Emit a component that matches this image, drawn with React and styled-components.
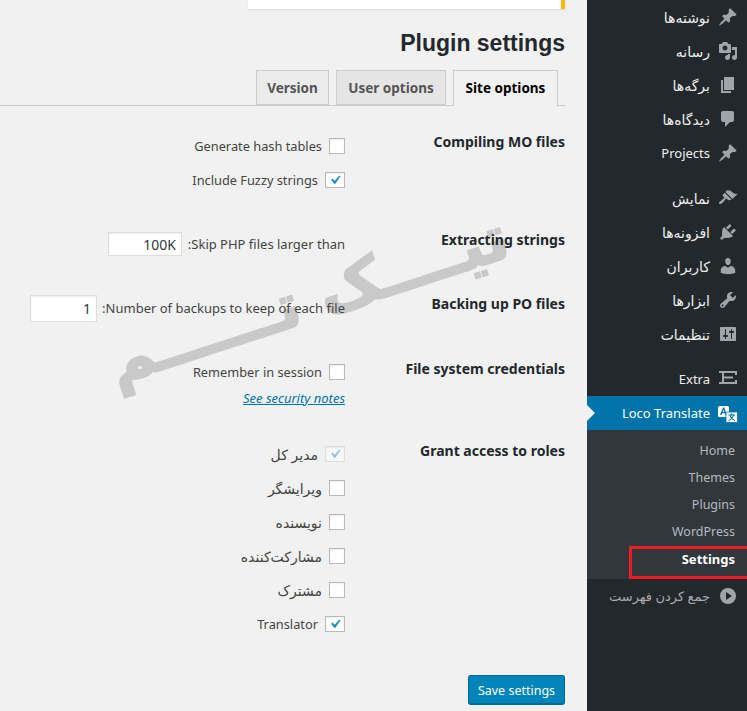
import React from 'react';
import styled, { createGlobalStyle } from 'styled-components';

const GlobalStyle = createGlobalStyle`
	html, body {
		margin: 0;
		padding: 0;
		background: #f1f1f1;
	}
	* {
		box-sizing: border-box;
	}
`;

const FONT = `'Noto Sans', 'DejaVu Sans', sans-serif`;

const Page = styled.div`
	display: flex;
	direction: rtl;
	width: 747px;
	height: 711px;
	overflow: hidden;
	position: relative;
	font-family: ${FONT};
	font-size: 13px;
	color: #444;
`;

const Sidebar = styled.nav`
	flex: 0 0 160px;
	background: #23282d;
`;

const MenuItem = styled.a`
	display: flex;
	align-items: center;
	gap: 8px;
	height: 34px;
	padding-right: 9px;
	margin-top: ${p => (p.$spaced ? '11px' : '0')};
	font-size: ${p => (p.$latin ? '13px' : '14px')};
	color: #eee;
	position: relative;
	background: ${p => (p.$active ? '#0073aa' : 'transparent')};

	svg {
		flex: 0 0 20px;
		fill: ${p => (p.$active ? '#fff' : '#a0a5aa')};
	}

	${p =>
		p.$active &&
		`
		color: #fff;
		&::after {
			content: '';
			position: absolute;
			left: 0;
			top: 9px;
			border: 8px solid transparent;
			border-left-color: #f1f1f1;
		}
	`}
`;

const SubMenu = styled.div`
	background: #32373c;
	padding: 7px 0;
`;

const SubItem = styled.a`
	display: flex;
	align-items: center;
	height: 27px;
	padding-right: 12px;
	font-size: ${p => (p.$current ? '13px' : '12.5px')};
	color: ${p => (p.$current ? '#fff' : '#b4b9be')};
	font-weight: ${p => (p.$current ? 700 : 400)};
	position: relative;

	${p =>
		p.$current &&
		`
		&::after {
			content: '';
			position: absolute;
			right: -4px;
			left: 42px;
			top: 1px;
			height: 27px;
			border: 3px solid #ed1c24;
		}
	`}
`;

const Collapse = styled(MenuItem)`
	font-size: 13px;
	color: #aaa;
`;

const Main = styled.main`
	flex: 1;
	padding-left: 0;
	padding-right: 22px;
	position: relative;
	z-index: 1;
`;

const Notice = styled.div`
	width: 317px;
	height: 9px;
	background: #fff;
	border-right: 4px solid #ffb900;
	box-shadow: 0 1px 1px rgba(0, 0, 0, 0.1);
`;

const Title = styled.h1`
	margin: 18px 0 11px;
	font-family: 'Liberation Sans', sans-serif;
	font-size: 23px;
	font-weight: 700;
	line-height: 32px;
	color: #23282d;
`;

const Tabs = styled.div`
	display: flex;
	gap: 7px;
	height: 36px;
	padding-right: 7px;
	border-bottom: 1px solid #ccc;
`;

const Tab = styled.a`
	width: ${p => p.$width}px;
	height: ${p => (p.$active ? '36px' : '35px')};
	border: 1px solid #ccc;
	border-bottom: ${p => (p.$active ? 'none' : '1px solid #ccc')};
	background: ${p => (p.$active ? '#f1f1f1' : p.$dim ? '#e5e5e5' : '#ececec')};
	color: ${p => (p.$active ? '#000' : '#555')};
	font-size: 13.5px;
	font-weight: 700;
	line-height: 34px;
	text-align: center;
`;

const Form = styled.form`
	padding-top: 23px;
`;

const Section = styled.section`
	display: grid;
	grid-template-columns: 220px 1fr;
	margin-bottom: 30px;
`;

const Heading = styled.h3`
	margin: 0;
	padding-top: ${p => p.$top || 3}px;
	font-size: 14px;
	font-weight: 700;
	line-height: 20px;
	color: #23282d;
`;

const Fields = styled.div`
	display: flex;
	flex-direction: column;
`;

const Field = styled.label`
	display: flex;
	align-items: center;
	gap: ${p => p.$gap || 7}px;
	height: 34px;
	font-size: ${p => p.$size || 12.8}px;
	white-space: nowrap;
`;

const Box = styled.span`
	flex: 0 0 16px;
	display: flex;
	align-items: center;
	justify-content: center;
	height: 16px;
	background: ${p => (p.$disabled ? 'rgba(255, 255, 255, 0.5)' : '#fff')};
	border: 1px solid ${p => (p.$disabled ? '#dedede' : '#b4b9be')};
	box-shadow: inset 0 1px 2px rgba(0, 0, 0, 0.07);

	svg {
		fill: ${p => (p.$disabled ? '#8ec5de' : '#1e8cbe')};
	}
`;

const TextInput = styled.input`
	width: ${p => p.$width}px;
	height: ${p => p.$height}px;
	padding: 0 5px;
	border: 1px solid #ddd;
	background: #fff;
	box-shadow: inset 0 1px 2px rgba(0, 0, 0, 0.07);
	color: #32373c;
	font-family: ${FONT};
	font-size: 14px;
	direction: rtl;
`;

const NoteLink = styled.a`
	display: block;
	margin-top: -2px;
	height: 20px;
	line-height: 22px;
	color: #0073aa;
	font-size: 13px;
	font-style: italic;
	text-decoration: underline;
`;

const SaveButton = styled.button`
	display: block;
	width: 97px;
	height: 30px;
	margin-top: 34px;
	padding: 1px 0 0;
	background: #0085ba;
	border: 1px solid #006799;
	border-bottom-width: 2px;
	border-radius: 3px;
	color: #fff;
	font-family: ${FONT};
	font-size: 12.5px;
`;

const Watermark = styled.div`
	position: absolute;
	left: 93px;
	top: 260px;
	width: 430px;
	direction: rtl;
	text-align: center;
	font-family: 'DejaVu Sans', sans-serif;
	font-size: 62px;
	font-weight: 700;
	line-height: 80px;
	white-space: nowrap;
	color: #c9c9c9;
	-webkit-text-stroke: 2px #c9c9c9;
	transform: rotate(-18deg);
	pointer-events: none;
`;

const Icon = ({ d, children }) => (
	<svg width="20" height="20" viewBox="0 0 20 20">
		{d ? <path d={d} fillRule="evenodd" /> : children}
	</svg>
);

const ICONS = {
	pin: 'M10.44 3.02l1.82-1.82 6.36 6.35-1.83 1.82c-1.05-.68-2.48-.57-3.41.36l-.75.75c-.92.93-1.04 2.35-.35 3.41l-1.83 1.82-2.41-2.41-2.8 2.79c-.42.42-3.38 2.71-3.8 2.29s1.86-3.39 2.28-3.81l2.79-2.79L4.1 9.36l1.83-1.82c1.05.69 2.48.57 3.4-.36l.75-.75c.93-.92 1.05-2.35.36-3.41z',
	media: 'M13 11V4c0-.55-.45-1-1-1h-1.67L9 1H5L3.67 3H2c-.55 0-1 .45-1 1v7c0 .55.45 1 1 1h10c.55 0 1-.45 1-1zM7 4.5c1.38 0 2.5 1.12 2.5 2.5S8.38 9.5 7 9.5 4.5 8.38 4.5 7 5.62 4.5 7 4.5zM14 6h5v10.5c0 1.38-1.12 2.5-2.5 2.5S14 17.88 14 16.5s1.12-2.5 2.5-2.5c.17 0 .34.02.5.05V9h-3V6zm-4 8.05V13h2v3.5c0 1.38-1.12 2.5-2.5 2.5S7 17.88 7 16.5 8.12 14 9.5 14c.17 0 .34.02.5.05z',
	page: 'M6 15V2h10v13H6zm-1 1h8v2H3V5h2v11z',
	comment: 'M5 2h9c1.1 0 2 .9 2 2v7c0 1.1-.9 2-2 2h-2l-5 5v-5H5c-1.1 0-2-.9-2-2V4c0-1.1.9-2 2-2z',
	brush: 'M14.48 11.06L7.41 3.99l1.5-1.5c.5-.56 2.3-.47 3.51.32 1.21.8 1.43 1.28 2.91 2.1 1.18.64 2.45 1.26 4.45.85zm-.71.71L6.7 4.7 4.93 6.47c-.39.39-.39 1.02 0 1.41l1.06 1.06c.39.39.39 1.03 0 1.42-.6.6-1.43 1.11-2.21 1.69-.35.26-.7.53-1.01.84C1.43 13.23.4 14.98 1.2 15.78c.79.79 2.55-.23 3.89-1.57.31-.31.58-.66.84-1.01.58-.78 1.09-1.61 1.69-2.21.39-.39 1.02-.39 1.41 0l1.06 1.06c.39.39 1.02.39 1.41 0z',
	plug: 'M13.11 4.36L9.87 7.6 8 5.73l3.24-3.24c.35-.34 1.05-.2 1.56.32.52.51.66 1.21.31 1.55zm-8 1.77l.91-1.12 9.01 9.01-1.19.84c-.71.71-2.63 1.16-3.82 1.16H6.14L4.9 17.26c-.59.59-1.54.59-2.12 0-.59-.58-.59-1.53 0-2.12l1.24-1.24v-3.88c0-1.13.4-3.19 1.09-3.89zm7.26 3.97l3.24-3.24c.34-.35 1.04-.21 1.55.31.52.51.66 1.21.31 1.55l-3.24 3.25z',
	user: 'M10 9.25c-2.27 0-2.73-3.44-2.73-3.44C7 4.02 7.82 2 9.97 2c2.16 0 2.98 2.02 2.71 3.81 0 0-.41 3.44-2.68 3.44zm0 2.57L12.72 10c2.39 0 4.52 2.33 4.52 4.53v2.49s-3.65 1.13-7.24 1.13c-3.65 0-7.24-1.13-7.24-1.13v-2.49c0-2.25 1.94-4.48 4.47-4.48z',
	tools: 'M16.68 9.77c-1.34 1.34-3.3 1.67-4.95.99l-5.41 6.52c-.99.99-2.59.99-3.58 0s-.99-2.59 0-3.57l6.52-5.42c-.68-1.65-.35-3.61.99-4.95 1.28-1.28 3.12-1.62 4.72-1.06l-2.89 2.89 2.82 2.82 2.86-2.87c.53 1.58.18 3.39-1.08 4.65zM3.81 16.21c.4.39 1.04.39 1.43 0 .4-.4.4-1.04 0-1.43-.39-.4-1.03-.4-1.43 0-.39.39-.39 1.03 0 1.43z',
	settings: 'M18 16V4c0-.55-.45-1-1-1H3c-.55 0-1 .45-1 1v12c0 .55.45 1 1 1h14c.55 0 1-.45 1-1zM8 11h1c.55 0 1 .45 1 1s-.45 1-1 1H8v1.5c0 .28-.22.5-.5.5s-.5-.22-.5-.5V13H6c-.55 0-1-.45-1-1s.45-1 1-1h1V5.5c0-.28.22-.5.5-.5s.5.22.5.5V11zm5-2h-1c-.55 0-1-.45-1-1s.45-1 1-1h1V5.5c0-.28.22-.5.5-.5s.5.22.5.5V7h1c.55 0 1 .45 1 1s-.45 1-1 1h-1v5.5c0 .28-.22.5-.5.5s-.5-.22-.5-.5V9z',
	extra: 'M1 2h18v4h-2V4H6v3.5h9v2H6V13h11v-2h2v4H1v-2h3V4H1z',
	collapse: 'M10 2a8 8 0 1 0 0 16 8 8 0 0 0 0-16zM8 14V6l6 4z',
	check: 'M14.83 4.89l1.34.94-5.81 8.38H9.02L5.78 9.67l1.34-1.25 2.57 2.4z'
};

const LocoIcon = () => (
	<Icon>
		<rect x="0" y="3" width="11" height="11" rx="1.5" fill="#fff" />
		<path d="M2 12l3-7.5h1.2L9 12H7.5l-.6-1.7H4.2L3.6 12zM4.7 9h1.7l-.85-2.4z" fill="#0073aa" fillRule="evenodd" />
		<rect x="8" y="9" width="11.5" height="10.5" rx="1" fill="#fff" stroke="#0073aa" strokeWidth="0.8" />
		<path d="M13.7 10.2v1.4M10.5 12h6.6M12 12c.5 2.4 2.3 4.3 5 5.6M15.5 12c-.5 2.4-2.3 4.3-5 5.6" fill="none" stroke="#0073aa" strokeWidth="1.1" />
	</Icon>
);

const CheckRow = ({ label, checked, disabled, size }) => (
	<Field $size={size}>
		<Box $disabled={disabled}>
			{checked && (
				<svg width="18" height="18" viewBox="0 0 20 20">
					<path d={ICONS.check} />
				</svg>
			)}
		</Box>
		{label}
	</Field>
);

const MENU_TOP = [
	{ label: 'نوشته‌ها', icon: 'pin' },
	{ label: 'رسانه', icon: 'media' },
	{ label: 'برگه‌ها', icon: 'page' },
	{ label: 'دیدگاه‌ها', icon: 'comment' },
	{ label: 'Projects', icon: 'pin', latin: true }
];

const MENU_MIDDLE = [
	{ label: 'نمایش', icon: 'brush' },
	{ label: 'افزونه‌ها', icon: 'plug' },
	{ label: 'کاربران', icon: 'user' },
	{ label: 'ابزارها', icon: 'tools' },
	{ label: 'تنظیمات', icon: 'settings' }
];

const SUB_MENU = ['Home', 'Themes', 'Plugins', 'WordPress', 'Settings'];

const ROLES = [
	{ label: 'مدیر کل', checked: true, disabled: true, size: 14 },
	{ label: 'ویرایشگر', size: 14 },
	{ label: 'نویسنده', size: 14 },
	{ label: 'مشارکت‌کننده', size: 14 },
	{ label: 'مشترک', size: 14 },
	{ label: 'Translator', checked: true }
];

const App = () => (
	<Page>
		<GlobalStyle />
		<Sidebar>
			{MENU_TOP.map(item => (
				<MenuItem key={item.label + item.icon} $latin={item.latin}>
					<Icon d={ICONS[item.icon]} />
					{item.label}
				</MenuItem>
			))}
			{MENU_MIDDLE.map((item, index) => (
				<MenuItem key={item.label} $spaced={index === 0}>
					<Icon d={ICONS[item.icon]} />
					{item.label}
				</MenuItem>
			))}
			<MenuItem $spaced $latin>
				<Icon d={ICONS.extra} />
				Extra
			</MenuItem>
			<MenuItem $active $latin>
				<LocoIcon />
				Loco Translate
			</MenuItem>
			<SubMenu>
				{SUB_MENU.map(name => (
					<SubItem key={name} $current={name === 'Settings'}>
						{name}
					</SubItem>
				))}
			</SubMenu>
			<Collapse>
				<Icon d={ICONS.collapse} />
				جمع کردن فهرست
			</Collapse>
		</Sidebar>
		<Main>
			<Notice />
			<Title>Plugin settings</Title>
			<Tabs>
				<Tab $active $width={105}>Site options</Tab>
				<Tab $dim $width={110}>User options</Tab>
				<Tab $width={73}>Version</Tab>
			</Tabs>
			<Form>
				<Section>
					<Heading>Compiling MO files</Heading>
					<Fields>
						<CheckRow label="Generate hash tables" />
						<CheckRow label="Include Fuzzy strings" checked />
					</Fields>
				</Section>
				<Section>
					<Heading>Extracting strings</Heading>
					<Fields>
						<Field $gap={6} $size={13}>
							Skip PHP files larger than:
							<TextInput $width={74} $height={24} defaultValue="100K" readOnly />
						</Field>
					</Fields>
				</Section>
				<Section>
					<Heading>Backing up PO files</Heading>
					<Fields>
						<Field $gap={5} $size={13}>
							Number of backups to keep of each file:
							<TextInput $width={67} $height={27} defaultValue="1" readOnly />
						</Field>
					</Fields>
				</Section>
				<Section>
					<Heading $top={4}>File system credentials</Heading>
					<Fields>
						<CheckRow label="Remember in session" />
						<NoteLink>See security notes</NoteLink>
					</Fields>
				</Section>
				<Section>
					<Heading $top={4}>Grant access to roles</Heading>
					<Fields>
						{ROLES.map(role => (
							<CheckRow key={role.label} {...role} />
						))}
					</Fields>
				</Section>
				<SaveButton type="button">Save settings</SaveButton>
			</Form>
		</Main>
		<Watermark>تیــــک تــــــم</Watermark>
	</Page>
);

export default App;
